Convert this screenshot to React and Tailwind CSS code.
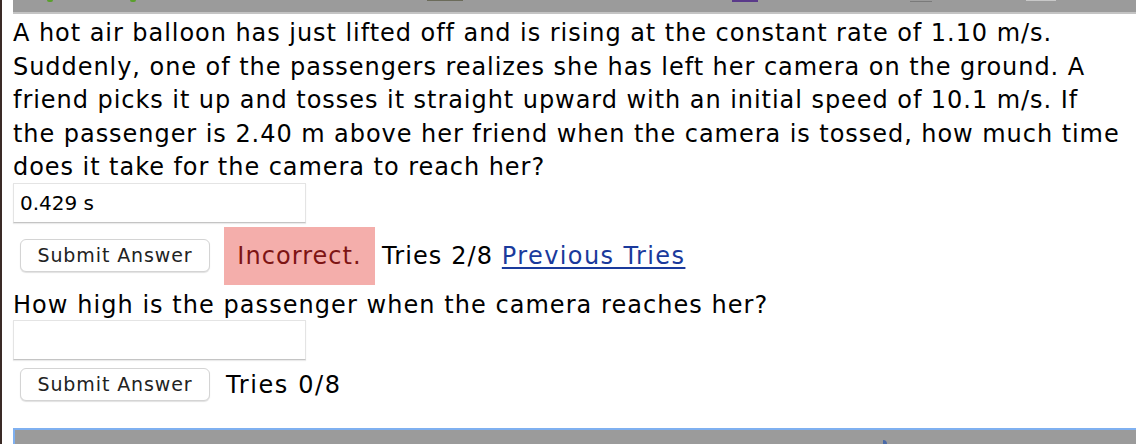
export default function App() {
  const lines = [
    "A hot air balloon has just lifted off and is rising at the constant rate of 1.10 m/s.",
    "Suddenly, one of the passengers realizes she has left her camera on the ground. A",
    "friend picks it up and tosses it straight upward with an initial speed of 10.1 m/s. If",
    "the passenger is 2.40 m above her friend when the camera is tossed, how much time",
    "does it take for the camera to reach her?",
  ];
  const sans = { fontFamily: '"DejaVu Sans", Verdana, sans-serif' };
  return (
    <div className="w-[1136px] h-[444px] overflow-hidden bg-white flex">
      <div className="w-[2px] bg-[#3a2a26] shrink-0" />
      <div className="flex-1 pl-[11px] flex flex-col overflow-hidden">
        <div className="relative h-[12px] bg-[#9b9b9b] shrink-0">
          <div className="absolute left-[34px] top-0 w-[6px] h-[2px] rounded-b-full bg-[#5aa02c]" />
          <div className="absolute left-[117px] top-0 w-[6px] h-[2px] rounded-b-full bg-[#5aa02c]" />
          <div className="absolute left-[414px] top-0 w-[36px] h-[1px] bg-[#6b6b5a]" />
          <div className="absolute left-[719px] top-0 w-[26px] h-[2px] bg-[#5a3a8a]" />
          <div className="absolute left-[897px] top-[1px] w-[22px] h-[1px] bg-[#7a7a7a]" />
          <div className="absolute left-[1013px] top-0 w-[30px] h-[1px] bg-[#c8c8c8]" />
        </div>
        <div className="h-[2px] bg-[#c4c4c4] shrink-0" />
        <div className="pt-[3px] text-[24px] leading-[33.5px] tracking-[0.95px] text-black whitespace-nowrap" style={sans}>
          {lines.map((l, i) => (
            <div key={i}>{l}</div>
          ))}
        </div>
        <div className="-mt-[2px] w-[293px] h-[40px] border border-[#e4e4e4] border-b-[#c4c4c4] shadow-[0_1px_1px_rgba(0,0,0,0.08)] flex items-center pl-[6px] text-[20px] text-black" style={sans}>
          0.429 s
        </div>
        <div className="flex items-center mt-[4px] h-[58px]">
          <button className="ml-[7px] w-[190px] h-[33px] rounded-[6px] border border-[#d4d4d4] bg-white shadow-[0_1px_1px_rgba(0,0,0,0.12)] text-[19px] tracking-[0.9px] text-[#222]" style={sans}>
            Submit Answer
          </button>
          <div className="ml-[14px] w-[151px] h-[58px] bg-[#f4aeab] text-[#7d1414] text-[24px] tracking-[1.05px] flex items-center justify-center" style={sans}>
            Incorrect.
          </div>
          <div className="ml-[7px] text-[24px] tracking-[1.1px] text-black" style={sans}>
            Tries 2/8{" "}
            <a href="#" className="text-[#1a3a9c] tracking-[1.4px] underline decoration-[2px] underline-offset-[3px]">
              Previous Tries
            </a>
          </div>
        </div>
        <div className="text-[24px] leading-[30px] tracking-[1.05px] text-black mt-[5px] whitespace-nowrap" style={sans}>
          How high is the passenger when the camera reaches her?
        </div>
        <div className="w-[293px] h-[40px] border border-[#e4e4e4] border-b-[#c4c4c4] shadow-[0_1px_1px_rgba(0,0,0,0.08)]" />
        <div className="flex items-center mt-[7px]">
          <button className="ml-[7px] w-[190px] h-[33px] rounded-[6px] border border-[#d4d4d4] bg-white shadow-[0_1px_1px_rgba(0,0,0,0.12)] text-[19px] tracking-[0.9px] text-[#222]" style={sans}>
            Submit Answer
          </button>
          <div className="ml-[16px] text-[24px] tracking-[1.6px] text-black" style={sans}>
            Tries 0/8
          </div>
        </div>
        <div className="relative mt-auto h-[16px] border-t-[2px] border-l-[2px] border-[#7fb0f0] bg-[#9b9b9b] shrink-0">
          <div className="absolute left-[868px] bottom-0 w-[4px] h-[4px] bg-[#4a6aa8] rounded-tr-full" />
        </div>
      </div>
    </div>
  );
}
